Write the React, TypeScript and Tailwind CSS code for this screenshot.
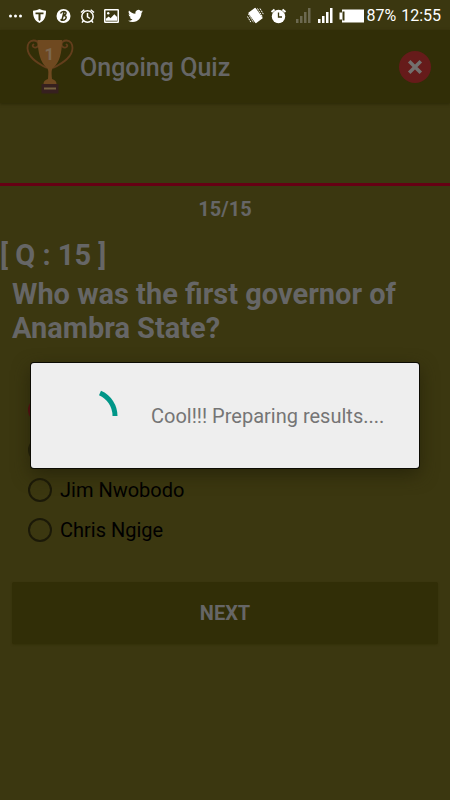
import { useState } from 'react';

const options = ['a', 'b', 'c', 'd'];
const labels: Record<string, string> = { c: 'Jim Nwobodo', d: 'Chris Ngige' };

function TrophyIcon() {
  return (
    <svg width="48" height="56" viewBox="0 0 48 56" fill="none" aria-hidden="true">
      <path
        d="M12.500 5C12 2 9.500 1.500 7.500 1.500C3.500 1.500 1.500 5 1.500 9C1.500 18 11 24 21 29M35.500 5C36 2 38.500 1.500 40.500 1.500C44.500 1.500 46.500 5 46.500 9C46.500 18 37 24 27 29"
        stroke="#633e1c"
        strokeWidth="1.800"
      />
      <path
        d="M12.500 5C12.500 8 10 9 8.500 8.500C6.500 8 6 6 7.500 5.500M35.500 5C35.500 8 38 9 39.500 8.500C41.500 8 42 6 40.500 5.500"
        stroke="#633e1c"
        strokeWidth="1.800"
        strokeLinecap="round"
      />
      <path
        d="M11.500 1H36C36 14 33.500 23 28 28C25 30.500 25.500 33 26 40C28.500 41 30.500 42 30.500 45H17.500C17.500 42 19.500 41 22 40C22.500 33 23 30.500 20 28C14.500 23 12 14 11.500 1Z"
        fill="#6f4920"
      />
      <rect x="15.500" y="45" width="17" height="9.500" fill="#36201f" />
      <rect x="18" y="48.500" width="12" height="2" fill="#75613f" />
      <text x="23.500" y="20.500" textAnchor="middle" fontFamily="Roboto, sans-serif" fontWeight="700" fontSize="17" fill="#7b6750">
        1
      </text>
    </svg>
  );
}

function SignalIcon({ className }: { className: string }) {
  return (
    <svg className={className} width="15" height="15" viewBox="0 0 15 15" fill="currentColor" aria-hidden="true">
      <path d="M0 11h2.500v4H0zM4 8h2.500v7H4zM8 4h2.500v11H8zM12 0h2.500v15H12z" />
    </svg>
  );
}

function StatusBar() {
  return (
    <div className="flex h-[30px] items-center justify-between bg-[#3b3710] pt-px pr-[9px] pl-2 text-white">
      <div className="flex items-center gap-[9px]">
        <svg width="15" height="16" viewBox="0 0 15 16" fill="currentColor" aria-hidden="true">
          <circle cx="2.500" cy="8" r="1.500" />
          <circle cx="7.500" cy="8" r="1.500" />
          <circle cx="12.500" cy="8" r="1.500" />
        </svg>
        <svg width="15" height="16" viewBox="0 0 15 16" aria-hidden="true">
          <path d="M7.500 1C10 2.200 12 2.700 14 2.700C14 9 12.500 12.500 7.500 15C2.500 12.500 1 9 1 2.700C3 2.700 5 2.200 7.500 1Z" fill="#fff" />
          <path d="M3.500 4.500H11.500V6.300H8.500V12L7.500 13L6.500 12V6.300H3.500Z" fill="#3b3710" />
        </svg>
        <svg width="15" height="16" viewBox="0 0 15 16" aria-hidden="true">
          <circle cx="7.500" cy="8" r="7" fill="#fff" />
          <path
            d="M4.500 5.500C5.500 3.500 8 3 9.500 3.800C11 5 9.500 7.300 7 7.500C10 7.200 11 9 9.500 11C8 12.500 6 12.500 4.500 11.300M8 4L6 12"
            fill="none"
            stroke="#3b3710"
            strokeWidth="1.500"
          />
        </svg>
        <svg width="15" height="16" viewBox="0 0 15 16" fill="none" stroke="currentColor" strokeWidth="1.500" aria-hidden="true">
          <circle cx="7.500" cy="8.500" r="5.700" />
          <path d="M7.500 5V8.800L10 10.500M1 4.500L4.300 1.700M14 4.500L10.700 1.700M3.500 12.500L2 14.700M11.500 12.500L13 14.700" />
        </svg>
        <svg width="15" height="16" viewBox="0 0 16 16" aria-hidden="true">
          <rect x="0.800" y="1.300" width="14.400" height="13.400" rx="0.500" fill="none" stroke="#fff" strokeWidth="1.600" />
          <circle cx="4.500" cy="5" r="1.300" fill="#fff" />
          <path d="M2 13V11L5 8.500L7 10.500L11 6L14 9V13Z" fill="#fff" />
        </svg>
        <svg width="15" height="16" viewBox="0 0 24 24" fill="currentColor" aria-hidden="true">
          <path d="M23.950 4.570a10 10 0 0 1-2.820.770 4.960 4.960 0 0 0 2.160-2.720c-.950.550-2 .950-3.130 1.180a4.920 4.920 0 0 0-8.380 4.480C7.690 8.090 4.070 6.130 1.640 3.160a4.820 4.820 0 0 0-.670 2.480c0 1.710.870 3.210 2.190 4.100a4.900 4.900 0 0 1-2.230-.620v.060a4.920 4.920 0 0 0 3.950 4.830 5 5 0 0 1-2.210.080 4.940 4.940 0 0 0 4.600 3.420A9.870 9.870 0 0 1 0 19.540a13.990 13.990 0 0 0 7.550 2.210c9.050 0 14-7.500 14-13.980 0-.210 0-.420-.020-.630a9.940 9.940 0 0 0 2.460-2.550z" />
        </svg>
      </div>
      <div className="flex items-center">
        <svg className="mr-[6px]" width="17" height="17" viewBox="0 0 17 17" aria-hidden="true">
          <rect x="4" y="2" width="9" height="13" rx="0.800" transform="rotate(-36 8.500 8.500)" fill="#fff" />
          <path d="M1.500 7L6.500 15.500M0.500 9.500L4 15.500M10.500 1.500L15.500 10M13 1.500L16.500 7.500" fill="none" stroke="#fff" strokeDasharray="1.700 0.700" />
        </svg>
        <svg className="mr-[9px]" width="17" height="16" viewBox="0 0 17 16" aria-hidden="true">
          <circle cx="8.500" cy="8.500" r="6.700" fill="#fff" />
          <path d="M1.500 4L4.500 1.500M15.500 4L12.500 1.500" stroke="#fff" strokeWidth="2" />
          <path d="M8.500 4.500V9H12" fill="none" stroke="#3b3710" strokeWidth="1.300" />
        </svg>
        <SignalIcon className="mr-[7px] text-[#6c6950]" />
        <SignalIcon className="mr-[6px]" />
        <svg width="25" height="14" viewBox="0 0 25 14" aria-hidden="true">
          <path d="M3 0.500H25V13.500H3V10.500H0.500V3.500H3Z" fill="#fff" />
          <path d="M3.500 2.500H5.500V11.500H3.500Z" fill="#3b3710" />
        </svg>
        <span className="ml-[2px] text-[16px] leading-5">87%</span>
        <span className="ml-[5px] text-[16px] leading-5">12:55</span>
      </div>
    </div>
  );
}

export default function App() {
  const [selected, setSelected] = useState('a');

  return (
    <main className="relative min-h-screen bg-[#3b3710] font-['Roboto',sans-serif] text-[#666666]">
      <StatusBar />

      <header className="flex h-[73px] items-center bg-[#312e07] pr-[19px] pl-[26px] shadow-[0_1px_3px_#2b2806]">
        <TrophyIcon />
        <h1 className="ml-[6px] flex-1 pt-[2px] text-[25px] leading-8 font-medium">Ongoing Quiz</h1>
        <button
          type="button"
          aria-label="Close quiz"
          className="flex size-8 items-center justify-center rounded-full bg-[#661b1a]"
        >
          <svg width="16" height="16" viewBox="0 0 16 16" fill="none" stroke="#73706e" strokeWidth="3.500" aria-hidden="true">
            <path d="M2.200 2.200L13.800 13.800M13.800 2.200L2.200 13.800" />
          </svg>
        </button>
      </header>

      <div className="mt-20 h-[3px] bg-[#660014]" />
      <p className="mt-[11px] text-center text-[20px] leading-6 font-bold">15/15</p>

      <h2 className="mt-[17px] text-[29px] leading-[34px] font-bold">[ Q : 15 ]</h2>
      <p className="mt-[5px] px-3 text-[29px] leading-[34px] font-bold">Who was the first governor of Anambra State?</p>

      <form className="mt-[45px]" onSubmit={(e) => e.preventDefault()}>
        {options.map((option) => (
          <label key={option} className="flex h-10 items-center gap-2 pl-7 text-[20px] text-black">
            <input
              type="radio"
              name="answer"
              aria-label={labels[option] ?? `Option ${option}`}
              checked={selected === option}
              onChange={() => setSelected(option)}
              className="size-6 appearance-none rounded-full border-2 border-[#1b1908] checked:border-[#660014]"
            />
            {labels[option]}
          </label>
        ))}
        <div className="px-3 pt-8 pb-6">
          <button
            type="submit"
            className="h-[62px] w-full rounded-xs bg-[#312e07] text-[20px] font-bold shadow-[0_1px_2px_#343109]"
          >
            NEXT
          </button>
        </div>
      </form>

      <div className="absolute inset-0 flex items-center px-[31px] pt-[31px]">
        <div
          role="dialog"
          aria-label="Preparing results"
          className="flex h-[105px] w-full items-center rounded-[3px] bg-[#eeeeee] pl-[31px] shadow-[0_0_0_1px_#0c0b03,0_6px_18px_#28250a]"
        >
          <svg width="56" height="56" viewBox="0 0 56 56" fill="none" aria-hidden="true">
            <path d="M38 5A25 25 0 0 1 53 28" stroke="#009688" strokeWidth="5" />
          </svg>
          <p className="ml-[33px] text-[20px] text-[#757575]">Cool!!! Preparing results....</p>
        </div>
      </div>
    </main>
  );
}
